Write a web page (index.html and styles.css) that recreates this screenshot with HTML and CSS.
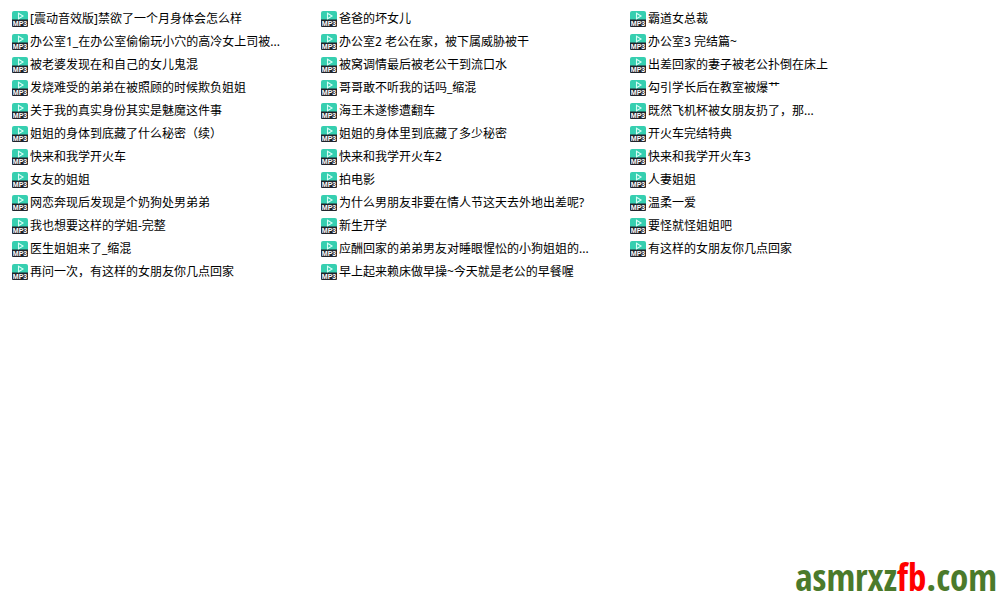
FILE: index.html
```html
<!DOCTYPE html>
<html lang="zh-CN">
<head>
<meta charset="utf-8">
<title>MP3</title>
<link rel="stylesheet" href="styles.css">
</head>
<body>
<svg class="defs" aria-hidden="true">
  <symbol id="mp3" viewBox="0 0 16 16">
    <path d="M2 0h12a2 2 0 0 1 2 2v7H0V2a2 2 0 0 1 2-2z" fill="#36cfb0"/>
    <path d="M0 8.5h16V15a1 1 0 0 1-1 1H1a1 1 0 0 1-1-1z" fill="#20242c"/>
    <path d="M6.5 2.3v5.4L11 5z" fill="none" stroke="#d8fff6" stroke-width="1.1"/>
    <text x="8" y="15" text-anchor="middle" class="tag">MP3</text>
  </symbol>
</svg>
<main class="page">
  <ul class="files">
    <li><svg class="icon"><use href="#mp3"/></svg><span>[震动音效版]禁欲了一个月身体会怎么样</span></li>
    <li><svg class="icon"><use href="#mp3"/></svg><span>爸爸的坏女儿</span></li>
    <li><svg class="icon"><use href="#mp3"/></svg><span>霸道女总裁</span></li>
    <li><svg class="icon"><use href="#mp3"/></svg><span>办公室1_在办公室偷偷玩小穴的高冷女上司被...</span></li>
    <li><svg class="icon"><use href="#mp3"/></svg><span>办公室2 老公在家，被下属威胁被干</span></li>
    <li><svg class="icon"><use href="#mp3"/></svg><span>办公室3 完结篇~</span></li>
    <li><svg class="icon"><use href="#mp3"/></svg><span>被老婆发现在和自己的女儿鬼混</span></li>
    <li><svg class="icon"><use href="#mp3"/></svg><span>被窝调情最后被老公干到流口水</span></li>
    <li><svg class="icon"><use href="#mp3"/></svg><span>出差回家的妻子被老公扑倒在床上</span></li>
    <li><svg class="icon"><use href="#mp3"/></svg><span>发烧难受的弟弟在被照顾的时候欺负姐姐</span></li>
    <li><svg class="icon"><use href="#mp3"/></svg><span>哥哥敢不听我的话吗_缩混</span></li>
    <li><svg class="icon"><use href="#mp3"/></svg><span>勾引学长后在教室被爆艹</span></li>
    <li><svg class="icon"><use href="#mp3"/></svg><span>关于我的真实身份其实是魅魔这件事</span></li>
    <li><svg class="icon"><use href="#mp3"/></svg><span>海王未遂惨遭翻车</span></li>
    <li><svg class="icon"><use href="#mp3"/></svg><span>既然飞机杯被女朋友扔了，那...</span></li>
    <li><svg class="icon"><use href="#mp3"/></svg><span>姐姐的身体到底藏了什么秘密（续）</span></li>
    <li><svg class="icon"><use href="#mp3"/></svg><span>姐姐的身体里到底藏了多少秘密</span></li>
    <li><svg class="icon"><use href="#mp3"/></svg><span>开火车完结特典</span></li>
    <li><svg class="icon"><use href="#mp3"/></svg><span>快来和我学开火车</span></li>
    <li><svg class="icon"><use href="#mp3"/></svg><span>快来和我学开火车2</span></li>
    <li><svg class="icon"><use href="#mp3"/></svg><span>快来和我学开火车3</span></li>
    <li><svg class="icon"><use href="#mp3"/></svg><span>女友的姐姐</span></li>
    <li><svg class="icon"><use href="#mp3"/></svg><span>拍电影</span></li>
    <li><svg class="icon"><use href="#mp3"/></svg><span>人妻姐姐</span></li>
    <li><svg class="icon"><use href="#mp3"/></svg><span>网恋奔现后发现是个奶狗处男弟弟</span></li>
    <li><svg class="icon"><use href="#mp3"/></svg><span>为什么男朋友非要在情人节这天去外地出差呢?</span></li>
    <li><svg class="icon"><use href="#mp3"/></svg><span>温柔一爱</span></li>
    <li><svg class="icon"><use href="#mp3"/></svg><span>我也想要这样的学姐-完整</span></li>
    <li><svg class="icon"><use href="#mp3"/></svg><span>新生开学</span></li>
    <li><svg class="icon"><use href="#mp3"/></svg><span>要怪就怪姐姐吧</span></li>
    <li><svg class="icon"><use href="#mp3"/></svg><span>医生姐姐来了_缩混</span></li>
    <li><svg class="icon"><use href="#mp3"/></svg><span>应酬回家的弟弟男友对睡眼惺忪的小狗姐姐的...</span></li>
    <li><svg class="icon"><use href="#mp3"/></svg><span>有这样的女朋友你几点回家</span></li>
    <li><svg class="icon"><use href="#mp3"/></svg><span>再问一次，有这样的女朋友你几点回家</span></li>
    <li><svg class="icon"><use href="#mp3"/></svg><span>早上起来赖床做早操~今天就是老公的早餐喔</span></li>
  </ul>
  <footer class="site">asmrxz<span class="accent">fb</span>.com</footer>
</main>
</body>
</html>
```
FILE: styles.css
```css
* {
  box-sizing: border-box;
}

body {
  margin: 0;
  background: #fff;
  color: #000;
  font: 12px/23px "Noto Sans", "Noto Sans CJK SC", sans-serif;
}

.defs {
  display: none;
}

.page {
  display: flex;
  flex-direction: column;
  justify-content: space-between;
  min-height: 100vh;
}

.files {
  display: grid;
  grid-template-columns: repeat(3, 1fr);
  margin: 0;
  padding: 7px 63px 0 12px;
  list-style: none;
}

.files li {
  display: flex;
  align-items: center;
  gap: 2px;
  height: 23px;
  white-space: nowrap;
}

.icon {
  flex: none;
  width: 16px;
  height: 16px;
}

.tag {
  fill: #fff;
  font: bold 7px "Liberation Sans", sans-serif;
}

.site {
  padding: 0 5px 7px 0;
  color: #4b7a2b;
  font: bold 37px/48px "Liberation Sans Narrow", "Open Sans Condensed", "Open Sans", sans-serif;
  text-align: right;
}

.accent {
  color: #f00;
}
```
